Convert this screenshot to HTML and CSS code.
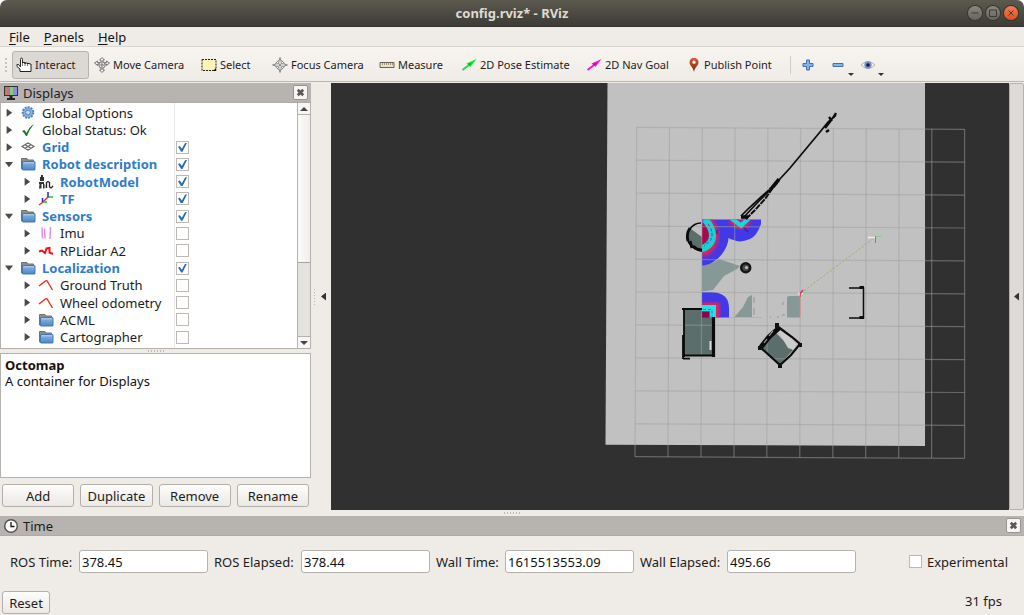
FILE: index.html
```html
<!DOCTYPE html>
<html lang="en">
<head>
<meta charset="utf-8">
<title>config.rviz* - RViz</title>
<link rel="stylesheet" href="styles.css">
</head>
<body>
<svg class="defs" aria-hidden="true">
  <defs>
    <linearGradient id="blue" x2="0" y2="1"><stop offset="0" stop-color="#8db8e4"/><stop offset="1" stop-color="#4d86c6"/></linearGradient>
    <linearGradient id="pinfill" x2="0" y2="1"><stop offset="0" stop-color="#e2502c"/><stop offset="1" stop-color="#6e3318"/></linearGradient>
    <symbol id="folder" viewBox="0 0 16 16"><path d="M1.500 13V2.500h5.500l1 1.500h5.500v9.500z" fill="#8d8f8a" stroke="#72746f"/><rect x="2.500" y="5.500" width="12.500" height="8.500" rx=".5" fill="url(#blue)" stroke="#4577b0"/><path d="M3.500 6.800h10.500" stroke="#aed0f2"/></symbol>
    <symbol id="path" viewBox="0 0 16 16"><path d="M1 9L8 3.500M8.500 3L14.500 13" fill="none" stroke="#ee2a18" stroke-width="1.400"/></symbol>
    <symbol id="cam" viewBox="0 0 16 16"><g fill="#eee" stroke="#777" stroke-width="1"><path d="M8 .5L10.500 3H9v10h1.500L8 15.500 5.500 13H7V3H5.500z"/><path d="M.5 6L3.500 4v1.500h9V4l3 2-3 2.500V7h-9v1.500z"/><circle cx="8" cy="8" r="3.200"/></g><path d="M5.500 8h5M8 5.500v5" stroke="#777"/></symbol>
  </defs>
</svg>
<div class="window">
  <header class="titlebar">
    <h1>config.rviz* - RViz</h1>
    <div class="controls">
      <button class="ctl" aria-label="Minimize"><svg viewBox="0 0 14 14"><path d="M3.500 7h7"/></svg></button>
      <button class="ctl" aria-label="Maximize"><svg viewBox="0 0 14 14"><path d="M3.500 4h7v6.500h-7z"/></svg></button>
      <button class="ctl close" aria-label="Close"><svg viewBox="0 0 14 14"><path d="M4.500 4.500l5 5M9.500 4.500l-5 5"/></svg></button>
    </div>
  </header>
  <nav class="menubar">
    <button><u>F</u>ile</button><button><u>P</u>anels</button><button><u>H</u>elp</button>
  </nav>
  <div class="toolbar" role="toolbar">
    <span class="grip"></span>
    <button class="tool interact active"><svg viewBox="0 0 16 16"><path d="M4.500 10V2.500q0-1.500 1-1.500t1 1.500V6.500V5.500h2.500v1.500V6h2.500v1.500V6.500h2V7h1.500v7.500h-11V12L1 9.500V7.500h1.500L4.500 10" fill="#fff" stroke="#222"/><path d="M6.500 6v3M9 7v2M11.500 7v2" stroke="#777"/></svg>Interact</button>
    <button class="tool move"><svg viewBox="0 0 16 16"><use href="#cam"/></svg>Move Camera</button>
    <button class="tool select"><svg viewBox="0 0 16 16"><path d="M1 2.500h14v11H1z" fill="#faf3b4" stroke="#222" stroke-dasharray="2 1"/><path d="M12 14l3-3v3z" fill="#111"/></svg>Select</button>
    <button class="tool focus"><svg viewBox="0 0 16 16"><g fill="#eee" stroke="#888"><circle cx="8" cy="8" r="4.500"/><path d="M8 .5l1.200 4v2.300h2.300l4 1.200-4 1.200H9.200v2.300l-1.200 4-1.200-4V9.200H4.500L.5 8l4-1.200h2.300V4.500z"/></g><circle cx="8" cy="8" r="1" fill="#777"/></svg>Focus Camera</button>
    <button class="tool measure"><svg viewBox="0 0 16 16"><path d="M1 5.500h14v5H1z" fill="#e9e3bf" stroke="#66635a"/><path d="M3.500 6v2M5.500 6v2M7.500 6v2M9.500 6v2M11.500 6v2M13.500 6v2" stroke="#8f886f" stroke-width=".8"/></svg>Measure</button>
    <button class="tool pose"><svg viewBox="0 0 16 16"><path d="M1.500 13L8 8" stroke="#17e53a" stroke-width="2"/><path d="M5.500 6.500L15.500 2 9.500 10z" fill="#17e53a"/><path d="M7 7l4-1.500-2.500 3z" fill="#10a326"/></svg>2D Pose Estimate</button>
    <button class="tool goal"><svg viewBox="0 0 16 16"><path d="M1.500 13L8 8" stroke="#f21ad2" stroke-width="2"/><path d="M5.500 6.500L15.500 2 9.500 10z" fill="#f21ad2"/><path d="M7 7l4-1.500-2.500 3z" fill="#ad0896"/></svg>2D Nav Goal</button>
    <button class="tool publish"><svg viewBox="0 0 16 16"><path d="M8 1C5 1 3.500 3 3.500 5.300 3.500 8.500 7 10 8 15c1-5 4.500-6.500 4.500-9.700C12.500 3 11 1 8 1z" fill="url(#pinfill)"/><circle cx="8" cy="5.200" r="1.600" fill="#fff"/></svg>Publish Point</button>
    <span class="divider"></span>
    <button class="tool iconbtn" aria-label="Add tool"><svg viewBox="0 0 16 16"><path d="M6.500 3h3v3.500H13v3H9.500V13h-3V9.500H3v-3h3.500z" fill="#8ab4df" stroke="#3b72af"/></svg></button>
    <button class="tool iconbtn" aria-label="Remove tool"><svg viewBox="0 0 16 16"><path d="M3 6.500h10v3H3z" fill="#8ab4df" stroke="#3b72af"/></svg><i></i></button>
    <button class="tool iconbtn" aria-label="View options"><svg viewBox="0 0 16 16"><path d="M1 8q7-7 14 0-7 7-14 0z" fill="#f5f5f3" stroke="#b5b1aa"/><circle cx="8" cy="8" r="3.700" fill="#7c8fc9"/><circle cx="8" cy="8" r="1.800" fill="#151a45"/></svg><i></i></button>
  </div>

  <main class="work">
    <section class="displays">
      <div class="dock-title">
        <svg viewBox="0 0 16 16"><path d="M1 1h14v10H1z" fill="#333"/><path d="M2 2h4.500v8H2z" fill="#c87575"/><path d="M6.500 2h3.500v8H6.500z" fill="#83cc83"/><path d="M10 2h4v8h-4z" fill="#8c8ce0"/><path d="M6.500 11h3v2h2.500v2H4v-2h2.500z" fill="#222"/></svg>
        <h2>Displays</h2><button class="x" aria-label="Close Displays"><svg viewBox="0 0 10 10"><path d="M2 2l6 6M8 2L2 8"/></svg></button>
      </div>
      <div class="treebox">
        <div class="tree" role="tree">
          <div class="row" role="treeitem"><div class="name"><i class="arr"></i><svg viewBox="0 0 16 16"><circle cx="8" cy="7.500" r="5.300" fill="#8db3dc" stroke="#4f83bc" stroke-width="2" stroke-dasharray="2 1"/><circle cx="8" cy="7.500" r="2.400" fill="#c9dcf0" stroke="#4f83bc"/></svg><span>Global Options</span></div></div>
          <div class="row" role="treeitem"><div class="name"><i class="arr"></i><svg viewBox="0 0 16 16"><path d="M2 9l2.500-1 2 3Q9 5 14 2 9 8 7 14H6Q4.500 11 2 9z" fill="#1c7a20"/></svg><span>Global Status: Ok</span></div></div>
          <div class="row on" role="treeitem"><div class="name"><i class="arr"></i><svg viewBox="0 0 16 16"><path d="M2 7.500L8 4l6 3.500L8 11zM5 5.700l6 3.600M11 5.700l-6 3.600" fill="none" stroke="#666" stroke-width="1.200"/></svg><label for="c1">Grid</label></div><input type="checkbox" id="c1" checked></div>
          <div class="row on" role="treeitem"><div class="name"><i class="arr open"></i><svg><use href="#folder"/></svg><label for="c2">Robot description</label></div><input type="checkbox" id="c2" checked></div>
          <div class="row on sub" role="treeitem"><div class="name"><i class="arr"></i><svg viewBox="0 0 16 16"><path d="M2 3h4v4H2zM1 8h5v2H1zM1.500 10h2v4.500H1zM5 10h1.500v4.500H5zM3 1h2v2H3z" fill="#333"/><path d="M8.500 14V8.500l1.500-1 1.500 1V13l1.500 1 2-2" fill="none" stroke="#222" stroke-width="1.300"/><path d="M7 11v3" stroke="#777"/></svg><label for="c3">RobotModel</label></div><input type="checkbox" id="c3" checked></div>
          <div class="row on sub" role="treeitem"><div class="name"><i class="arr"></i><svg viewBox="0 0 16 16" fill="none" stroke-width="1.500"><path d="M5 11L10 6M5 11l-4 3" stroke="#e33"/><path d="M10 6h5M5 11h4" stroke="#1c2"/><path d="M10 6V1M4.500 11V7" stroke="#22e"/></svg><label for="c4">TF</label></div><input type="checkbox" id="c4" checked></div>
          <div class="row on" role="treeitem"><div class="name"><i class="arr open"></i><svg><use href="#folder"/></svg><label for="c5">Sensors</label></div><input type="checkbox" id="c5" checked></div>
          <div class="row sub" role="treeitem"><div class="name"><i class="arr"></i><svg viewBox="0 0 16 16"><path d="M4 2.500l.5 11M6.500 3.500l.5 10M12.500 2l-.5 12" fill="none" stroke="#e58ae5" stroke-width="1.500"/></svg><label for="c6">Imu</label></div><input type="checkbox" id="c6"></div>
          <div class="row sub" role="treeitem"><div class="name"><i class="arr"></i><svg viewBox="0 0 16 16"><path d="M1 8.500l3-1 3 2.500 1.500-4.500 3-.5v4.500l3.500 1.500" fill="none" stroke="#f01515" stroke-width="2"/></svg><label for="c7">RPLidar A2</label></div><input type="checkbox" id="c7"></div>
          <div class="row on" role="treeitem"><div class="name"><i class="arr open"></i><svg><use href="#folder"/></svg><label for="c8">Localization</label></div><input type="checkbox" id="c8" checked></div>
          <div class="row sub" role="treeitem"><div class="name"><i class="arr"></i><svg><use href="#path"/></svg><label for="c9">Ground Truth</label></div><input type="checkbox" id="c9"></div>
          <div class="row sub" role="treeitem"><div class="name"><i class="arr"></i><svg><use href="#path"/></svg><label for="c10">Wheel odometry</label></div><input type="checkbox" id="c10"></div>
          <div class="row sub" role="treeitem"><div class="name"><i class="arr"></i><svg><use href="#folder"/></svg><label for="c11">ACML</label></div><input type="checkbox" id="c11"></div>
          <div class="row sub" role="treeitem"><div class="name"><i class="arr"></i><svg><use href="#folder"/></svg><label for="c12">Cartographer</label></div><input type="checkbox" id="c12"></div>
          <div class="row" role="treeitem"><div class="name"><i class="arr none"></i><svg><use href="#folder"/></svg></div><input type="checkbox" aria-label="Next display"></div>
        </div>
        <div class="scroll"><button aria-label="Scroll up"><i class="up"></i></button><div class="thumb"></div><div class="trough"></div><button aria-label="Scroll down"><i class="down"></i></button></div>
      </div>
      <div class="hsplit"><span></span></div>
      <div class="info"><b>Octomap</b><p>A container for Displays</p></div>
      <div class="actions"><button class="btn">Add</button><button class="btn">Duplicate</button><button class="btn">Remove</button><button class="btn">Rename</button></div>
    </section>
    <div class="vsplit"><span></span><button aria-label="Hide left dock"></button></div>
    <div class="view">
      <svg viewBox="331 83 678 427" preserveAspectRatio="xMidYMid slice" role="img" aria-label="Map view">
        <defs>
          <clipPath id="cu"><path d="M702 219.500H761V224Q757 236 750 239 741 243 735 240.500 730 239 728.500 238C728 250 716 265 702 265.500z"/></clipPath>
          <clipPath id="cl"><path d="M702 292h10Q729 293 729 308v9.500H702z"/></clipPath>
          <filter id="glow" x="-50%" y="-50%" width="200%" height="200%"><feGaussianBlur stdDeviation="2"/></filter>
        </defs>
        <path d="M607.500 83H925V446L605.500 444.700z" fill="#c1c1c1"/>
        <path d="M702 265Q713 264 719 259L740 266 737 269 724 276 713 290 702 291.500zM752 295l-4 2-5 10-9 10.500h18zM787 297l2-1h11v21.500h-13z" fill="#869996"/>
        <path d="M702 237v14q-9 0-13-7-3-9 2-15z" fill="#5c6e6b"/><path d="M684 310h29v46h-29zM776 333l17 17-13 14-20-17z" fill="#5c6e6b"/>
        <path d="M778 331l6 0 12 13-2 6-6-2z" fill="#cdcdcd"/><path d="M709.500 341h2v9h-2z" fill="#ddd"/>
        <g clip-path="url(#cu)">
          <path d="M700 215h64v55h-64z" fill="#4039e8"/>
          <path d="M706 219Q717 232 712 243 709 250 701 252" fill="none" stroke="#f0204c" stroke-width="10" filter="url(#glow)"/>
          <path d="M731 219l10 7 8-7" fill="none" stroke="#f0204c" stroke-width="8" filter="url(#glow)"/>
          <path d="M702 224q7 3 7 10-1 8-7 11z" fill="#a80850"/>
          <path d="M705 219Q716 232 711 242 708 247 701 249" fill="none" stroke="#12d4d0" stroke-width="7"/>
          <path d="M708 224Q715 234 710 241L704 246" fill="none" stroke="#7932b8" stroke-dasharray="3 2"/>
          <path d="M731 218l10 7.500 8-7.500" fill="none" stroke="#16dada" stroke-width="4.500"/><path d="M737 219l4 3 4-3" fill="none" stroke="#7932b8" stroke-dasharray="2 1"/>
        </g>
        <path d="M744 228l4 4M717 230v4" stroke="#5b147b" stroke-width="1.200" fill="none"/>
        <g clip-path="url(#cl)">
          <path d="M700 290h30v30h-30z" fill="#4039e8"/><path d="M700 308h14v12" fill="none" stroke="#f0204c" stroke-width="11" filter="url(#glow)"/><path d="M702 312h7v6h-7z" fill="#930050"/>
          <path d="M700 308h13v12" fill="none" stroke="#20e4e4" stroke-width="6"/><path d="M703 309.500h9v8" fill="none" stroke="#5960d8" stroke-dasharray="3 2"/>
        </g>
        <g fill="none" stroke="#a0a0a0" stroke-opacity=".5" stroke-width="1.200">
          <path d="M636.700 127.300L635 456.700M669.500 127.500L668 456.900M702.300 127.700L701 457M735 127.900L734 457.200M767.900 128.100L766.800 457.300M800.600 128.300L799.800 457.500M833.400 128.500L832.800 457.700M866.200 128.700L865.700 457.800M899 128.900L898.700 458M931.800 129.100L931.600 458.100M964.600 129.300V458.300"/>
          <path d="M636.700 127.300L964.600 129.300M636.500 160.200L964.600 162.200M636.400 193.200L964.600 195.100M636.200 226.100L964.600 228M636 259.100L964.600 260.900M635.900 292L964.600 293.800M635.700 324.900L964.600 326.700M635.500 357.900L964.600 359.600M635.300 390.800L964.600 392.500M635.200 423.800L964.600 425.400M635 456.700L964.600 458.300"/>
        </g>
        <g fill="none" stroke="#0b0b0b">
          <path d="M701 223q-7 0-11 6-5 7-1 14 5 7 13 8" stroke-width="1.600"/><path d="M690 228q-4 6-2 13M690 241l2 7M693 246q4 4 9 4" stroke-width="2.800"/>
          <path d="M682 309h20M684 309v48M683 335v24M683 355.500h31M683 358.700h7" stroke-width="1.800"/><path d="M713.500 317v40" stroke-width="3.200"/>
          <path d="M777 326l8 6 7 5 8 7-9 11-11 10-19-17" stroke-width="2.200"/><path d="M779 328l-10 9-8 10" stroke-width="5"/><path d="M773 331l-4 5M767 339l-3 4" stroke="#aaa" stroke-width="1.200"/><path d="M775 323h4v5h-4zM798 343h4v4h-4zM778 363h4v5h-4zM758 346h5v4h-5z" fill="#111" stroke="none"/>
          <path d="M849 288h14.500v30H849" stroke-width="1.500"/><path d="M859.500 287.500h4.500M859.500 317.500h4.500" stroke-width="3"/>
          <path d="M743 218l16-17 11-11 9-10 11-12 10-12 10-12 10-12 8-10 8-7" stroke-width="1.700"/><path d="M746 219l9-9 10-11 7-10 7-8" stroke-width="2" stroke-dasharray="6 1"/><path d="M741 216l8-8 11-10 9-8" stroke-width="1.700"/><path d="M741 217h7M770 190l9-11" stroke-width="3.500"/><path d="M825 128l7-9M826 132l3-2M829 117l3 4M833 118l3-5" stroke-width="2.400"/>
        </g>
        <circle cx="745.700" cy="267.800" r="4.500" fill="#4a4a4a" stroke="#161616" stroke-width="2.500"/><circle cx="746.500" cy="267.500" r="1.600" fill="#bbb"/>
        <path d="M801 293L874 238" stroke="#a8a862" stroke-dasharray="2 2"/>
        <path d="M868 237.500h8M798 293.500h5" stroke="#eee" stroke-width="1.500"/><path d="M876 236.500h6M801 292.500h6" stroke="#8bd08b"/><path d="M875.500 236v7M800.500 292v5" stroke="#cf6262"/><path d="M800 294l3-4" stroke="#ec2394" stroke-width="1.500"/><path d="M800.500 297v20" stroke="#c99"/><path d="M729 317.500h33" stroke="#b2acd0"/><path d="M754 297v6M754 308v7M783 302v3M782 315h3M770 317h1M777 317h2" stroke="#869996"/>
      </svg>
    </div>
    <div class="rightdock"><button aria-label="Show right dock"></button></div>
  </main>
  <div class="hsplit wide"><span></span></div>

  <section class="time">
    <div class="dock-title">
      <svg viewBox="0 0 16 16"><circle cx="8" cy="8" r="6.300" fill="#fff" stroke="#555" stroke-width="1.500"/><path d="M8 4v4.500h3.500" fill="none" stroke="#111" stroke-width="1.300"/></svg>
      <h2>Time</h2><button class="x" aria-label="Close Time"><svg viewBox="0 0 10 10"><path d="M2 2l6 6M8 2L2 8"/></svg></button>
    </div>
    <div class="fields">
      <label class="short" for="t1">ROS Time:</label><input type="text" id="t1" value="378.45">
      <label class="long" for="t2">ROS Elapsed:</label><input type="text" id="t2" value="378.44">
      <label class="short" for="t3">Wall Time:</label><input type="text" id="t3" value="1615513553.09">
      <label class="long" for="t4">Wall Elapsed:</label><input type="text" id="t4" value="495.66">
      <span class="exp"><input type="checkbox" id="exp"><label for="exp">Experimental</label></span>
    </div>
  </section>
  <footer class="status"><button class="btn">Reset</button><span class="fps">31 fps</span></footer>
</div>
</body>
</html>
```

FILE: styles.css
```css
* { box-sizing: border-box; }
body { margin: 0; background: #fff; color: #1c1c1c; font: 13px/16px "Noto Sans", "Open Sans", sans-serif; }
button { font: inherit; color: inherit; border: 0; background: none; padding: 0; margin: 0; }
h1, h2, p { margin: 0; font: inherit; }
i { display: block; flex: none; }
.defs { position: absolute; width: 0; height: 0; }
.window { min-height: 100vh; display: flex; flex-direction: column; background: #efebe7; border-radius: 7px 7px 0 0; overflow: hidden; }

.titlebar { height: 27px; display: grid; grid-template-columns: 1fr auto 1fr; align-items: center; background: linear-gradient(#5c594f, #3d3b36); color: #dfdbd2; border-bottom: 1px solid #34322e; }
.titlebar h1 { grid-column: 2; font-weight: 700; }
.controls { display: flex; justify-content: flex-end; gap: 4px; padding-right: 6px; }
.ctl { width: 14px; height: 14px; border-radius: 50%; background: linear-gradient(#8a877e, #67645d); box-shadow: 0 0 0 1px #37352f; display: flex; }
.ctl svg { width: 14px; height: 14px; fill: none; stroke: #3c3a35; }
.ctl.close { background: linear-gradient(#f47c54, #e0501f); }

.menubar { height: 20px; display: flex; gap: 14px; padding-left: 9px; align-items: center; border-bottom: 1px solid #d8d4cf; color: #111; }
.menubar u { text-underline-offset: 2px; }

.toolbar { height: 35px; display: flex; align-items: center; background: linear-gradient(#f8f5f1, #efebe7); border-bottom: 1px solid #bab6b1; padding: 2px 0 0 4px; font-size: 11px; white-space: nowrap; }
.grip { width: 4px; height: 16px; margin-right: 4px; background: radial-gradient(circle, #c5c1bc 1px, transparent 1px) 0 0 / 4px 4px; flex: none; }
.tool { height: 28px; display: flex; align-items: center; gap: 3px; padding-left: 4px; flex: 0 1 auto; }
.tool svg { width: 16px; height: 16px; flex: none; }
.interact { width: 77px; }
.move { width: 108px; padding-left: 5px; }
.select { width: 70px; }
.focus { width: 108px; padding-left: 5px; }
.measure { width: 82px; }
.pose { width: 125px; }
.goal { width: 100px; }
.publish { width: 108px; gap: 2px; }
.active { background: #dcd8d4; border: 1px solid #b6b2ae; border-radius: 3px; padding-left: 3px; }
.divider { width: 1px; height: 18px; background: #cfcbc6; margin-right: 6px; flex: none; }
.iconbtn { width: 30px; position: relative; padding-left: 3px; }
.iconbtn i { position: absolute; right: 3px; bottom: 3px; border: 3px solid transparent; border-top-color: #333; border-bottom: 0; }

.work { flex: 1; display: flex; padding-top: 1px; }
.displays { width: 311px; flex: none; display: flex; flex-direction: column; }
.dock-title { height: 20px; display: flex; align-items: center; gap: 4px; padding: 0 3px; background: #b7b3b0; border-bottom: 1px solid #aeaaa7; flex: none; }
.dock-title > svg { width: 16px; height: 16px; flex: none; }
.dock-title h2 { flex: 1; }
.x { width: 15px; height: 15px; background: #f7f5f4; border: 1px solid #98948f; border-radius: 2px; display: flex; align-items: center; justify-content: center; }
.x svg { width: 9px; height: 9px; stroke: #5a5856; stroke-width: 3; }

.treebox { height: 246px; flex: none; display: flex; background: #fff; border: 1px solid #b5b1ad; border-top: 0; overflow: hidden; }
.tree { flex: 1; height: 260px; padding-top: 1px; display: grid; grid-auto-rows: 1fr; background: linear-gradient(#eceae8, #eceae8) 173px 0 / 1px 100% no-repeat; }
.row { display: flex; align-items: center; gap: 1px; }
.name { width: 174px; display: flex; align-items: center; white-space: nowrap; padding-left: 4px; }
.sub .name { padding-left: 22px; }
.name svg { width: 16px; height: 16px; margin: 0 6px 0 7px; flex: none; }
.arr { width: 8px; height: 8px; background: #4b4a48; clip-path: polygon(20% 0, 90% 50%, 20% 100%); }
.arr.open { clip-path: polygon(0 20%, 100% 20%, 50% 85%); }
.arr.none { visibility: hidden; }
.on label { color: #2f7cc9; font-weight: 700; }
input[type="checkbox"] { appearance: none; width: 13px; height: 13px; margin: 0; background: #fff; border: 1px solid #bdb9b5; display: grid; place-items: center; flex: none; }
input[type="checkbox"]:checked::after { content: ""; width: 9px; height: 9px; background: #2b6cb0; clip-path: polygon(0 45%, 20% 38%, 43% 68%, 80% 0, 100% 0, 50% 100%, 35% 100%); }
.scroll { width: 13px; display: flex; flex-direction: column; border-left: 1px solid #b5b1ad; background: #e4e2df; }
.scroll button { height: 12px; display: grid; place-items: center; background: #f8f7f6; border-bottom: 1px solid #b5b1ad; }
.scroll button:last-child { border-bottom: 0; border-top: 1px solid #b5b1ad; }
.thumb { flex: 2; background: linear-gradient(90deg, #fbfbfa, #f1efed); border-bottom: 1px solid #a9a5a1; }
.trough { flex: 1; }
.up, .down { border: 4px solid transparent; }
.up { border-bottom-color: #444; border-top: 0; }
.down { border-top-color: #444; border-bottom: 0; }

.hsplit { height: 4px; display: grid; place-items: center; flex: none; }
.hsplit span { width: 16px; height: 2px; background: repeating-linear-gradient(90deg, #bbb7b2 0 1px, transparent 1px 3px); }
.hsplit.wide { height: 6px; }
.info { flex: 1; background: #fff; border: 1px solid #b5b1ad; padding: 3px 4px; color: #111; }
.info b { display: block; }
.actions { display: flex; gap: 6px; padding: 6px 2px 3px; }
.actions .btn { flex: 1; }
.btn { height: 23px; background: linear-gradient(#fdfdfc, #ebe8e5); border: 1px solid #b3afab; border-radius: 3px; }

.vsplit { width: 20px; flex: none; display: flex; align-items: center; gap: 6px; padding-left: 3px; }
.vsplit span { width: 1px; height: 16px; background: repeating-linear-gradient(#bbb7b2 0 1px, transparent 1px 3px); }
.vsplit button, .rightdock button { width: 5px; height: 8px; background: #333; clip-path: polygon(100% 0, 0 50%, 100% 100%); }
.view { flex: 1; min-width: 0; display: flex; background: #303030; }
.view svg { width: 100%; height: 100%; display: block; }
.rightdock { width: 15px; flex: none; display: grid; place-items: center; background: #dedad7; border: 1px solid #b5b1ad; border-radius: 2px; }

.fields { display: flex; align-items: center; gap: 6px; padding: 14px 16px 8px 10px; }
.fields label { white-space: nowrap; flex: none; }
.short { width: 63px; }
.long { width: 81px; }
.fields input[type="text"] { flex: 0 1 129px; min-width: 0; height: 23px; font: inherit; color: #111; border: 1px solid #b5b1ad; border-radius: 3px; background: #fff; padding: 0 2px; }
.exp { margin-left: auto; display: flex; align-items: center; gap: 5px; }
.status { display: flex; justify-content: space-between; align-items: flex-end; padding: 10px 22px 1px 2px; }
.status .btn { width: 48px; }
.fps { padding-bottom: 5px; }
```
